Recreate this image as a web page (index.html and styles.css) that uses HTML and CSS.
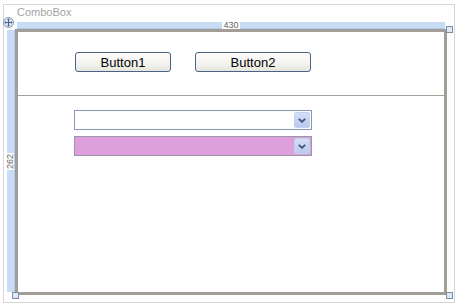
FILE: index.html
```html
<!DOCTYPE html>
<html lang="en">

<head>
  <meta charset="UTF-8">
  <title>ComboBox</title>
  <link rel="stylesheet" href="styles.css">
</head>

<body>
  <div id="frame">
    <div class="title">ComboBox</div>
    <svg class="move-icon" width="11" height="11" viewBox="0 0 11 11">
      <circle cx="5.5" cy="5.5" r="5" fill="#dbe6f5" stroke="#7b93b5" />
      <path d="M5.5 1.8v7.4M1.8 5.5h7.4" stroke="#4b6186" stroke-width="1" />
      <path d="M5.5 1.5l-1.5 1.6h3zM5.5 9.5l-1.5-1.6h3zM1.5 5.5l1.6-1.5v3zM9.5 5.5l-1.6-1.5v3z" fill="#4b6186" />
    </svg>
    <div id="workspace">
      <div class="corner"></div>
      <div class="ruler ruler-h"><span>430</span></div>
      <div class="ruler ruler-v"><span>262</span></div>
      <div id="surface">
        <div class="button-row">
          <button class="btn btn1">Button1</button>
          <button class="btn btn2">Button2</button>
        </div>
        <div class="separator"></div>
        <div class="combo-list">
          <div class="combo">
            <span class="combo-text"></span>
            <span class="combo-drop"><svg width="8" height="5" viewBox="0 0 8 5"><path d="M0.8 0.8L4 3.8L7.2 0.8" fill="none" stroke="#3b4f78" stroke-width="1.8" /></svg></span>
          </div>
          <div class="combo plum">
            <span class="combo-text"></span>
            <span class="combo-drop"><svg width="8" height="5" viewBox="0 0 8 5"><path d="M0.8 0.8L4 3.8L7.2 0.8" fill="none" stroke="#3b4f78" stroke-width="1.8" /></svg></span>
          </div>
        </div>
      </div>
      <div class="handle handle-tr"></div>
      <div class="handle handle-bl"></div>
      <div class="handle handle-br"></div>
    </div>
  </div>
</body>

</html>
```

FILE: styles.css
```css
body {
  margin: 0;
  background-color: #fff;
  font-family: "Liberation Sans", Arial, sans-serif;
}

#frame {
  position: relative;
  margin: 4px 0 0 3px;
  width: 450px;
  height: 297px;
  border: 1px solid #d6d6d6;
  background-color: #fff;
}

.title {
  padding: 1px 0 0 13px;
  height: 13px;
  line-height: 13px;
  font-size: 11px;
  color: #a3a3a3;
}

.move-icon {
  position: absolute;
  left: -1px;
  top: 12px;
}

#workspace {
  position: relative;
  margin: 3px 0 0 3px;
  display: grid;
  grid-template-columns: 8px 432px;
  grid-template-rows: 7px 266px;
}

.ruler {
  background-color: #c9dcf5;
  display: flex;
  align-items: center;
  justify-content: center;
  font-size: 9px;
  color: #666;
}

.ruler span {
  background-color: #fff;
  padding: 0 1px;
  line-height: 7px;
}

.ruler-h {
  margin: 0 2px 0 2px;
  border-bottom: 1px solid #b3cbe9;
}

.ruler-v {
  margin: 1px 0 3px 0;
  border-right: 1px solid #b3cbe9;
}

.ruler-v span {
  transform: rotate(-90deg);
}

#surface {
  border: 3px solid #a39d97;
  background-color: #fff;
}

.button-row {
  display: flex;
  gap: 24px;
  padding: 20px 0 0 57px;
}

.btn {
  height: 20px;
  padding: 0;
  border: 1px solid #4a6283;
  border-radius: 3px;
  background: linear-gradient(#fdfdfd, #f3f2ee 60%, #e6e4de);
  font-family: "Liberation Sans", Arial, sans-serif;
  font-size: 13px;
  color: #000;
}

.btn1 {
  width: 96px;
}

.btn2 {
  width: 116px;
}

.separator {
  margin-top: 23px;
  height: 1px;
  background-color: #a6a29d;
}

.combo-list {
  display: flex;
  flex-direction: column;
  gap: 6px;
  padding: 14px 0 0 56px;
}

.combo {
  width: 238px;
  height: 20px;
  box-sizing: border-box;
  border: 1px solid #8397b3;
  background-color: #fff;
  display: flex;
  align-items: center;
  justify-content: flex-end;
  padding-right: 1px;
}

.combo.plum {
  background-color: #dda0dd;
  border-color: #9a96a6;
}

.combo-drop {
  width: 16px;
  height: 16px;
  box-sizing: border-box;
  border: 1px solid #c3d1ec;
  border-radius: 2px;
  background: linear-gradient(#d4dff5, #b9c9ee);
  display: flex;
  align-items: center;
  justify-content: center;
}

.handle {
  position: absolute;
  width: 5px;
  height: 5px;
  border: 1px solid #7a8ea8;
  background-color: #dfe8f4;
}

.handle-tr {
  left: 439px;
  top: 4px;
}

.handle-bl {
  left: 5px;
  top: 270px;
}

.handle-br {
  left: 439px;
  top: 270px;
}
```
